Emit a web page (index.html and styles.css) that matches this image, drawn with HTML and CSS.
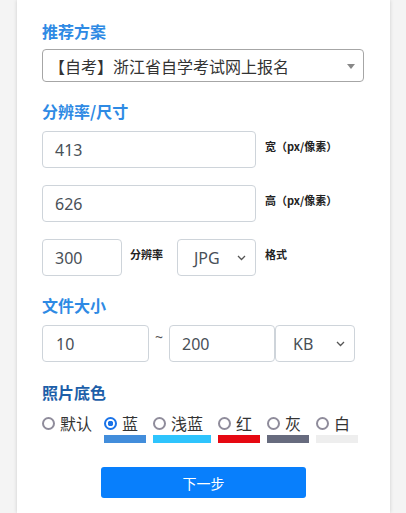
FILE: index.html
```html
<!DOCTYPE html>
<html lang="zh-CN">
<head>
<meta charset="utf-8">
<link rel="stylesheet" href="styles.css">
</head>
<body>
<div class="card">
  <h2 class="title">推荐方案</h2>
  <div class="plan-select">
    <span>【自考】浙江省自学考试网上报名</span>
    <svg class="tri" width="8" height="5" viewBox="0 0 8 5"><path d="M0 0H8L4 5Z" fill="#888"/></svg>
  </div>

  <h2 class="title t2">分辨率/尺寸</h2>
  <div class="row">
    <div class="field w-wide">413</div>
    <span class="lbl">宽（px/像素）</span>
  </div>
  <div class="row gap-row">
    <div class="field w-wide">626</div>
    <span class="lbl">高（px/像素）</span>
  </div>
  <div class="row gap-row">
    <div class="field w-dpi">300</div>
    <span class="lbl lbl-dpi">分辨率</span>
    <div class="field sel w-fmt"><span>JPG</span>
      <svg width="9" height="6" viewBox="0 0 9 6"><path d="M1 1L4.5 4.5L8 1" fill="none" stroke="#555" stroke-width="1.3"/></svg>
    </div>
    <span class="lbl">格式</span>
  </div>

  <h2 class="title t3">文件大小</h2>
  <div class="row">
    <div class="field w-min">10</div>
    <span class="tilde">~</span>
    <div class="field w-max">200</div>
    <div class="field sel w-unit"><span>KB</span>
      <svg width="9" height="6" viewBox="0 0 9 6"><path d="M1 1L4.5 4.5L8 1" fill="none" stroke="#555" stroke-width="1.3"/></svg>
    </div>
  </div>

  <h2 class="title t4 dark">照片底色</h2>
  <div class="colors">
    <div class="opt o-def">
      <label class="radio"><span class="dot"></span>默认</label>
    </div>
    <div class="opt o-sm">
      <label class="radio"><span class="dot on"></span>蓝</label>
      <span class="sw c-blue"></span>
    </div>
    <div class="opt o-lg">
      <label class="radio"><span class="dot"></span>浅蓝</label>
      <span class="sw c-light"></span>
    </div>
    <div class="opt o-sm">
      <label class="radio"><span class="dot"></span>红</label>
      <span class="sw c-red"></span>
    </div>
    <div class="opt o-sm">
      <label class="radio"><span class="dot"></span>灰</label>
      <span class="sw c-gray"></span>
    </div>
    <div class="opt o-sm">
      <label class="radio"><span class="dot"></span>白</label>
      <span class="sw c-white"></span>
    </div>
  </div>

  <div class="actions">
    <button class="next">下一步</button>
  </div>
</div>
</body>
</html>
```
FILE: styles.css
```css
html, body {
  margin: 0;
  padding: 0;
}
body {
  background: #f4f4f4;
  font-family: "Noto Sans", "Noto Sans CJK SC", sans-serif;
  color: #333;
}
.card {
  background: #fff;
  margin: 0 16px 0 17px;
  min-height: 100vh;
  box-sizing: border-box;
  padding: 20px 25px 0 25px;
  box-shadow: 0 0 4px rgba(0, 0, 0, 0.16);
}
.title {
  margin: 0;
  font-size: 16px;
  line-height: 22px;
  font-weight: 700;
  color: #2e8ae4;
  font-family: "Noto Sans CJK SC", sans-serif;
}
.title.dark { color: #1d5fa9; }
.t2 { margin-top: 18px; }
.t3 { margin-top: 18px; }
.t4 { margin-top: 19px; }

.plan-select {
  margin-top: 7px;
  width: 322px;
  height: 33px;
  box-sizing: border-box;
  border: 1px solid #a6a6a6;
  border-radius: 4px;
  display: flex;
  align-items: center;
  justify-content: space-between;
  padding: 0 8px 0 6px;
  font-size: 16px;
  color: #333;
  font-family: "Noto Sans CJK SC", sans-serif;
}
.tri { margin-top: 1px; }

.row {
  display: flex;
  align-items: flex-start;
  margin-top: 9px;
}
.gap-row { margin-top: 17px; }
.field {
  height: 37px;
  box-sizing: border-box;
  border: 1px solid #ced4da;
  border-radius: 4px;
  display: flex;
  align-items: center;
  padding-left: 12px;
  font-size: 16px;
  color: #495057;
}
.sel {
  justify-content: space-between;
  padding-right: 9px;
}
.w-wide { width: 214px; }
.w-dpi { width: 80px; }
.w-fmt { width: 79px; padding-left: 16px; }
.w-min { width: 107px; padding-left: 13px; }
.w-max { width: 106px; padding-left: 12px; }
.w-unit { width: 80px; padding-left: 17px; }

.lbl {
  font-size: 11px;
  line-height: 16px;
  font-weight: 700;
  color: #222;
  padding-top: 7px;
  margin-left: 9px;
  font-family: "Noto Sans CJK SC", sans-serif;
}
.lbl-dpi { margin-left: 8px; margin-right: 14px; }
.tilde {
  width: 20px;
  text-align: center;
  font-size: 14px;
  line-height: 16px;
  color: #555;
  padding-top: 4px;
}

.colors {
  display: flex;
  gap: 7px;
  margin-top: 9px;
}
.opt {
  display: flex;
  flex-direction: column;
}
.o-def { width: 55px; }
.o-sm { width: 42px; }
.o-lg { width: 58px; }
.radio {
  display: flex;
  align-items: center;
  gap: 5px;
  font-size: 16px;
  line-height: 22px;
  height: 22px;
  color: #333;
  white-space: nowrap;
  font-family: "Noto Sans CJK SC", sans-serif;
}
.dot {
  width: 13px;
  height: 13px;
  box-sizing: border-box;
  border: 2px solid #8f8c9b;
  border-radius: 50%;
  flex: none;
}
.dot.on {
  border-color: #1a73e8;
  background: radial-gradient(circle, #1a73e8 0 2.6px, #fff 3px);
}
.sw {
  display: block;
  height: 8px;
  margin-top: 1px;
  width: 100%;
}
.c-blue { background: #428ddb; }
.c-light { background: #2ec4fd; }
.c-red { background: #e60812; }
.c-gray { background: #676b7e; }
.c-white { background: #eeeeee; }

.actions {
  display: flex;
  justify-content: center;
  margin-top: 24px;
  margin-left: -25px;
  margin-right: -25px;
}
.next {
  width: 205px;
  height: 31px;
  border: none;
  border-radius: 3px;
  background: #087ffc;
  color: #fff;
  font-size: 14px;
  font-family: "Noto Sans CJK SC", sans-serif;
  padding: 0;
}
```
